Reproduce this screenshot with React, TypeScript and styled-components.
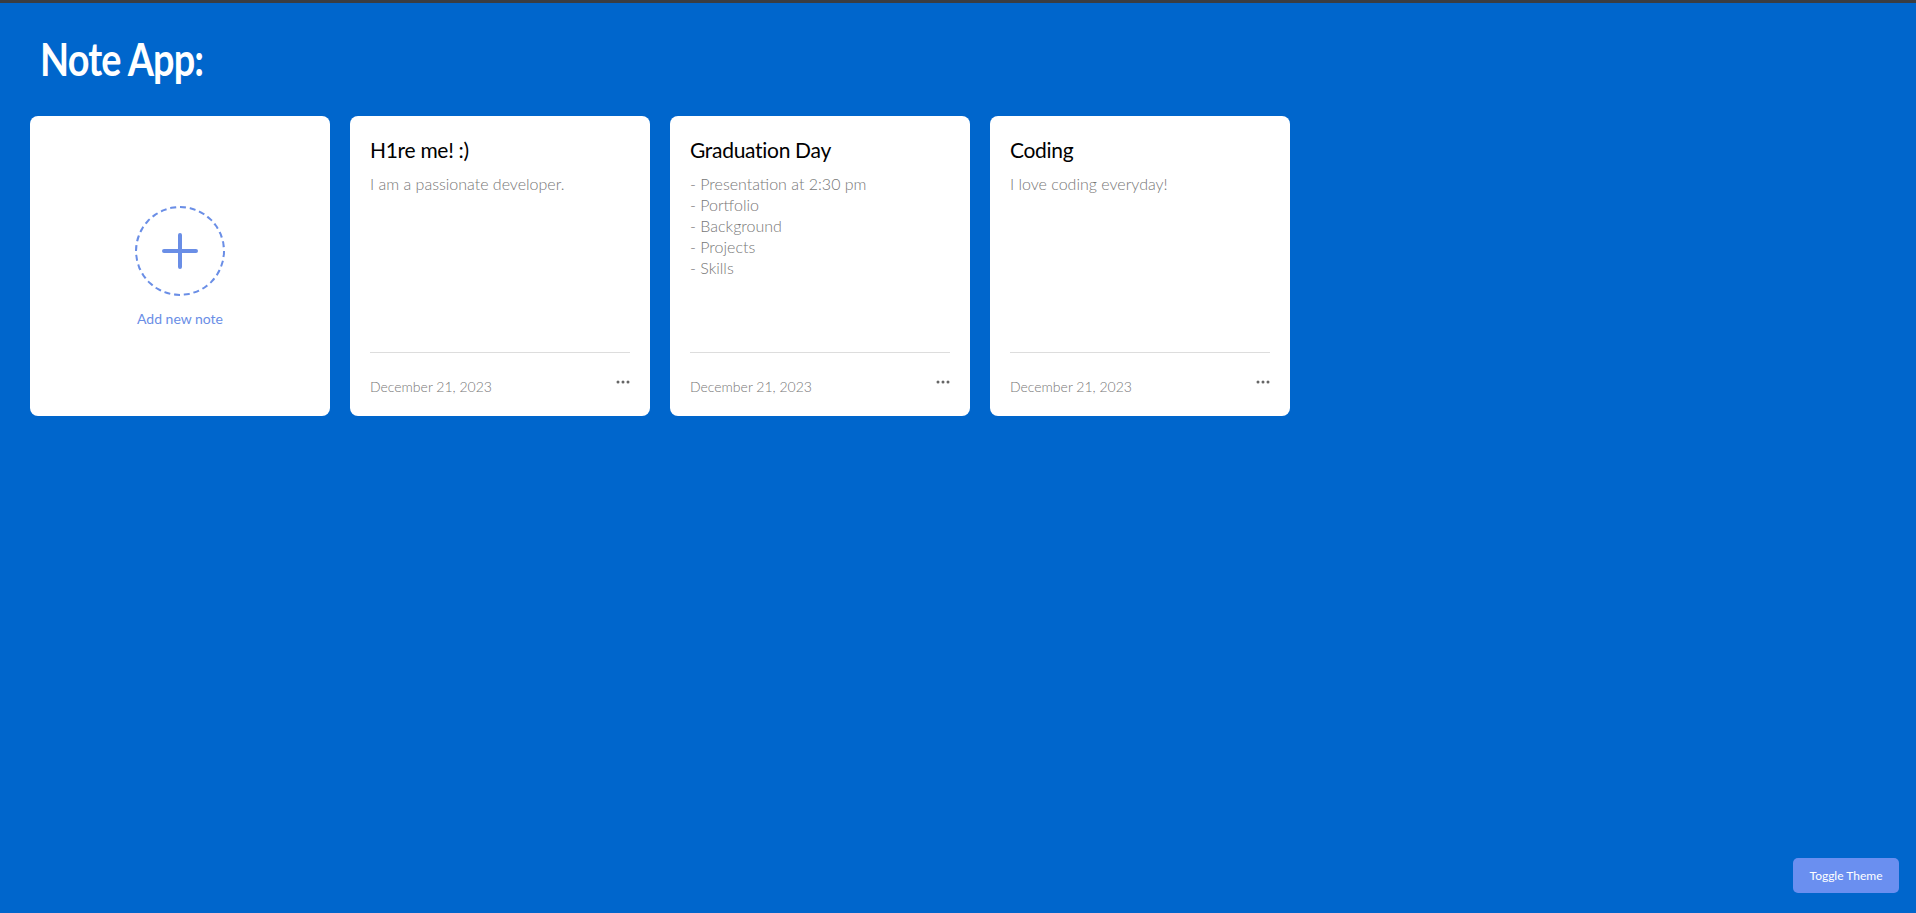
import React from "react";
import styled, { createGlobalStyle } from "styled-components";

const GlobalStyle = createGlobalStyle`
  html, body {
    margin: 0;
    padding: 0;
    height: 100%;
  }
  body {
    background: #0066cc;
    font-family: Lato, "Open Sans", sans-serif;
    border-top: 3px solid #3a3d42;
    box-sizing: border-box;
    min-height: 913px;
  }
  * { box-sizing: border-box; }
`;

const Page = styled.main`
  padding: 0 30px;
`;

const Header = styled.header`
  height: 113px;
  padding: 28px 0 0 10px;
`;

const Heading = styled.h1`
  display: inline-block;
  margin: 0;
  color: #ffffff;
  font-family: Lato, sans-serif;
  font-weight: 700;
  font-size: 45px;
  line-height: 56px;
  letter-spacing: -1px;
  transform: scaleX(0.84);
  transform-origin: left center;
`;

const Grid = styled.section`
  display: grid;
  grid-template-columns: repeat(auto-fill, 300px);
  gap: 20px;
`;

const CardBase = styled.div`
  background: #ffffff;
  border-radius: 8px;
  height: 300px;
`;

const AddCard = styled(CardBase)`
  display: flex;
  flex-direction: column;
  align-items: center;
  justify-content: center;
  gap: 16px;
  cursor: pointer;
`;

const AddCircle = styled.div`
  width: 90px;
  height: 90px;
  border-radius: 50%;
  border: 2px dashed #6a8ee6;
  display: flex;
  align-items: center;
  justify-content: center;
`;

const AddLabel = styled.span`
  color: #6a8ee6;
  font-size: 14px;
  font-weight: 400;
  margin-top: -2px;
`;

const NoteCard = styled(CardBase)`
  display: flex;
  flex-direction: column;
  padding: 20px 20px 0;
`;

const NoteBody = styled.div`
  flex: 1;
  border-bottom: 1px solid #dddddd;
`;

const NoteTitle = styled.h2`
  margin: 0 0 9px;
  font-size: 21px;
  font-weight: 400;
  line-height: 28px;
  color: #000000;
  letter-spacing: -0.3px;
`;

const NoteText = styled.p`
  margin: 0;
  font-size: 16px;
  font-weight: 300;
  line-height: 21px;
  color: #777777;
  white-space: pre-line;
`;

const Footer = styled.div`
  height: 63px;
  display: flex;
  justify-content: space-between;
  align-items: center;
`;

const DateText = styled.span`
  font-size: 14px;
  font-weight: 300;
  color: #777777;
  padding-top: 4px;
`;

const MoreButton = styled.button`
  background: none;
  border: none;
  padding: 0;
  margin-bottom: 6px;
  cursor: pointer;
  display: flex;
`;

const ToggleButton = styled.button`
  position: fixed;
  right: 17px;
  bottom: 20px;
  width: 106px;
  height: 35px;
  border: none;
  border-radius: 5px;
  background: #6a8ff0;
  color: #ffffff;
  font-family: Lato, sans-serif;
  font-size: 12px;
  cursor: pointer;
`;

const notes = [
  { title: "H1re me! :)", text: "I am a passionate developer.", date: "December 21, 2023" },
  {
    title: "Graduation Day",
    text: "- Presentation at 2:30 pm\n- Portfolio\n- Background\n- Projects\n- Skills",
    date: "December 21, 2023",
  },
  { title: "Coding", text: "I love coding everyday!", date: "December 21, 2023" },
];

export default function App() {
  return (
    <>
      <GlobalStyle />
      <Page>
        <Header>
          <Heading>Note App:</Heading>
        </Header>
        <Grid>
          <AddCard>
            <AddCircle>
              <svg width="36" height="36" viewBox="0 0 36 36">
                <path d="M18 2v32M2 18h32" stroke="#6a8ee6" strokeWidth="4" strokeLinecap="round" />
              </svg>
            </AddCircle>
            <AddLabel>Add new note</AddLabel>
          </AddCard>
          {notes.map((n) => (
            <NoteCard key={n.title}>
              <NoteBody>
                <NoteTitle>{n.title}</NoteTitle>
                <NoteText>{n.text}</NoteText>
              </NoteBody>
              <Footer>
                <DateText>{n.date}</DateText>
                <MoreButton aria-label="more">
                  <svg width="14" height="4" viewBox="0 0 14 4">
                    <circle cx="2" cy="2" r="1.5" fill="#666" />
                    <circle cx="7" cy="2" r="1.5" fill="#666" />
                    <circle cx="12" cy="2" r="1.5" fill="#666" />
                  </svg>
                </MoreButton>
              </Footer>
            </NoteCard>
          ))}
        </Grid>
      </Page>
      <ToggleButton>Toggle Theme</ToggleButton>
    </>
  );
}
